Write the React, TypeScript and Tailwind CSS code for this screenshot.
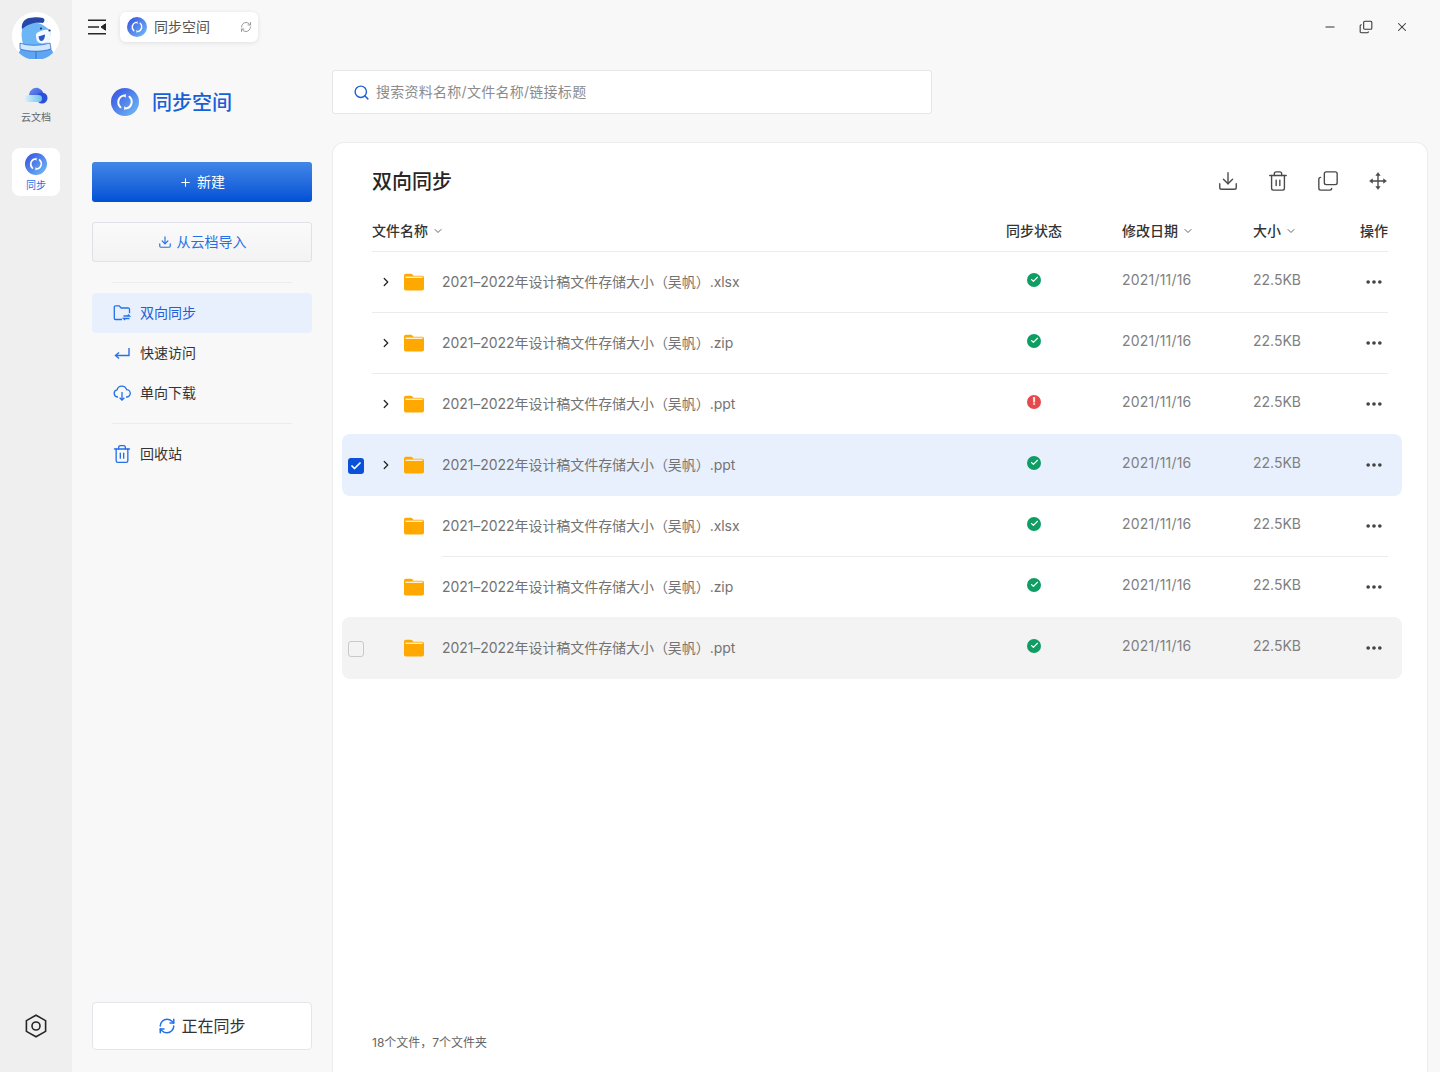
import React from 'react'
import { ChevronDown, ChevronRight, Search, Plus, Download, Trash2, Copy, Minus, X, Ellipsis, Check, RefreshCw } from 'lucide-react'

const SyncLogo = ({ size }: { size: number }) => (
  <svg width={size} height={size} viewBox="0 0 28 28" className="shrink-0">
    <defs>
      <linearGradient id={`logo${size}`} x1="0.1" y1="0.1" x2="0.9" y2="0.9">
        <stop offset="0" stopColor="#3a58e0" />
        <stop offset="1" stopColor="#6cb4f5" />
      </linearGradient>
    </defs>
    <circle cx="14" cy="14" r="14" fill={`url(#logo${size})`} />
    <path d="M12.4 7.6a6.8 6.8 0 0 0-2.9 11.6" fill="none" stroke="#fff" strokeWidth="2" strokeLinecap="round" />
    <path d="M15.6 20.4a6.8 6.8 0 0 0 2.9-11.6" fill="none" stroke="#fff" strokeWidth="2" strokeLinecap="round" />
    <path d="M14.8 5.8v4l-3-2zM13.2 22.2v-4l3 2z" fill="#fff" />
  </svg>
)

const Mascot = () => (
  <svg width="48" height="48" viewBox="0 0 48 48" className="rounded-full bg-white">
    {/* coat */}
    <path d="M6 47c0-6 2-10 5-12h26c3 2 5 6 5 12z" fill="#5ea6f2" />
    <path d="M24 38v9" stroke="#2a56c8" strokeWidth="0.7" />
    {/* face */}
    <path d="M11 32c-2-7-2-14 1-19 6-3 14-3 19 0l7 5c1 5 0 10-3 13-6 4-18 4-24 1z" fill="#6cb6f6" />
    {/* hat */}
    <path d="M10 17c-1-5 2-10 7-11 6-1 10-1 14 0 2 1 2 3 0 5-7-1-14 0-21 6z" fill="#2747a8" />
    {/* muzzle */}
    <path d="M24 22c3-3 8-5 14-4 1 5 0 10-2 12-4 2-9 2-11-1-1-2-1-5-1-7z" fill="#f2faff" />
    <path d="M26.500 24.500l6.500-2c0 3.500-1.500 6.500-3.500 6.500s-2.500-2-3-4.500z" fill="#2a56c8" />
    <circle cx="29" cy="16.500" r="1.100" fill="#1c2f70" />
    <circle cx="37.500" cy="18.500" r="1.100" fill="#1c2f70" />
    {/* scarf */}
    <path d="M8 31c8 3 20 3 30 0l1 6c-9 3-22 3-31 0z" fill="#cfe9fc" stroke="#2a56c8" strokeWidth="0.7" />
  </svg>
)

const CloudLogo = () => (
  <svg width="24" height="20" viewBox="0 0 24 20">
    <defs>
      <linearGradient id="cloudTop" x1="0" y1="0" x2="1" y2="1">
        <stop offset="0" stopColor="#6f8df2" />
        <stop offset="1" stopColor="#2b4fd8" />
      </linearGradient>
      <linearGradient id="cloudBar" x1="0" y1="0" x2="1" y2="0">
        <stop offset="0" stopColor="#d8f0fb" />
        <stop offset="1" stopColor="#6fc0f0" />
      </linearGradient>
    </defs>
    <path d="M5 11c0-6 5-9 9-8 3 1 5 3 5 5l-4 6H6z" fill="url(#cloudTop)" />
    <circle cx="18" cy="13" r="5.500" fill="#2b4fd8" />
    <rect x="1" y="10" width="17" height="7" rx="3.500" fill="url(#cloudBar)" />
  </svg>
)

const Folder = () => (
  <svg width="20" height="18" viewBox="0 0 20 18" className="shrink-0">
    <path d="M0 2.500A1.800 1.800 0 0 1 1.800.7h5c.6 0 1 .2 1.400.6L9.500 2.700h8.700A1.800 1.800 0 0 1 20 4.500v11.200a1.800 1.800 0 0 1-1.800 1.800H1.800A1.800 1.800 0 0 1 0 15.700z" fill="#ffa800" />
    <rect x="1.500" y="3.600" width="17" height="1.300" fill="#fff" fillOpacity="0.9" />
  </svg>
)

const FolderSyncIcon = () => (
  <svg width="18" height="16" viewBox="0 0 18 16" fill="none" stroke="#2570e8" strokeWidth="1.300">
    <path d="M9 14.500H2.500a1.200 1.200 0 0 1-1.200-1.200V2a1.200 1.200 0 0 1 1.200-1.200h3.700l2 2.200h7.100a1.200 1.200 0 0 1 1.200 1.200v4" />
    <path d="M10.500 11h6l-1.600-1.400M16.500 13.500h-6l1.600 1.400" />
  </svg>
)

const ReturnIcon = () => (
  <svg width="16" height="13" viewBox="0 0 16 13" fill="none" stroke="#2570e8" strokeWidth="1.400">
    <path d="M15 1v7.500H2" />
    <path d="M5 5.500L1.500 8.500 5 11.500" />
  </svg>
)

const CloudDownIcon = () => (
  <svg width="18" height="16" viewBox="0 0 18 16" fill="none" stroke="#2570e8" strokeWidth="1.300">
    <path d="M5 12H4.500A3.600 3.600 0 0 1 4 4.900a5 5 0 0 1 9.600-.3A3.700 3.700 0 0 1 13.500 12H13" />
    <path d="M9 7v8M6.600 12.800L9 15l2.400-2.200" />
  </svg>
)

const HexIcon = () => (
  <svg width="22" height="24" viewBox="0 0 22 24" fill="none" stroke="#262626" strokeWidth="1.600">
    <path d="M11 1.200l9.600 5.400v10.800L11 22.800 1.400 17.400V6.600z" />
    <circle cx="11" cy="12" r="4" />
  </svg>
)

const MenuFold = () => (
  <svg width="20" height="16" viewBox="0 0 20 16" fill="none" stroke="#262626" strokeWidth="1.500">
    <path d="M1 1.200h18M1 14.800h18M1 8h11" />
    <path d="M18.500 4.800v6.400L14 8z" fill="#262626" strokeWidth="1" />
  </svg>
)

const MoveIcon = () => (
  <svg width="18" height="18" viewBox="0 0 18 18" fill="#4a4a4a" stroke="#4a4a4a" strokeWidth="1.400">
    <path d="M9 2v14M2 9h14" fill="none" />
    <path d="M9 .5L11.200 3.500H6.800zM9 17.500L6.800 14.500H11.200zM.5 9L3.500 6.800V11.200zM17.500 9L14.500 11.200V6.800z" strokeWidth="0.500" />
  </svg>
)

const StatusDot = ({ error }: { error?: boolean }) =>
  error ? (
    <span className="w-[14px] h-[14px] rounded-full bg-[#e5484d] flex items-center justify-center text-white text-[11px] font-bold leading-none">!</span>
  ) : (
    <span className="w-[14px] h-[14px] rounded-full bg-[#0f9d63] flex items-center justify-center">
      <Check size={9} color="#fff" strokeWidth={3} />
    </span>
  )

interface FileRow {
  name: string
  expandable: boolean
  error?: boolean
  state?: 'checked' | 'hover'
  line?: 'full' | 'inset'
}

const rows: FileRow[] = [
  { name: '2021–2022年设计稿文件存储大小（吴帆）.xlsx', expandable: true, line: 'full' },
  { name: '2021–2022年设计稿文件存储大小（吴帆）.zip', expandable: true, line: 'full' },
  { name: '2021–2022年设计稿文件存储大小（吴帆）.ppt', expandable: true, error: true },
  { name: '2021–2022年设计稿文件存储大小（吴帆）.ppt', expandable: true, state: 'checked' },
  { name: '2021–2022年设计稿文件存储大小（吴帆）.xlsx', expandable: false, line: 'inset' },
  { name: '2021–2022年设计稿文件存储大小（吴帆）.zip', expandable: false },
  { name: '2021–2022年设计稿文件存储大小（吴帆）.ppt', expandable: false, state: 'hover' }
]

const Row = ({ row }: { row: FileRow }) => (
  <div
    className={`relative -ml-[30px] -mr-[14px] pl-[6px] flex items-center rounded-lg ${
      row.state === 'checked'
        ? 'h-[62px] -mt-px pb-px bg-[#e9f0fd]'
        : row.state === 'hover'
          ? 'h-[62px] -mt-px pb-px bg-[#f3f3f3]'
          : 'h-[61px] pb-[2px]'
    }`}
  >
    <span className="w-4 h-4 shrink-0">
      {row.state === 'checked' && (
        <span className="w-4 h-4 mt-px rounded-[3px] bg-[#0a50d8] flex items-center justify-center">
          <Check size={12} color="#fff" strokeWidth={3.5} />
        </span>
      )}
      {row.state === 'hover' && <span className="block w-4 h-4 mt-px rounded-[3px] border border-[#c9c9c9]" />}
    </span>
    <span className="w-[40px] pl-1 shrink-0 flex justify-center">
      {row.expandable && <ChevronRight size={14} color="#262626" strokeWidth={2.2} />}
    </span>
    <Folder />
    <span className="ml-[18px] w-[522px] shrink-0 text-sm tracking-[-0.06px] text-[#737373]">{row.name}</span>
    <span className="w-[70px] shrink-0 ml-[35px] -mt-1 flex justify-center">
      <StatusDot error={row.error} />
    </span>
    <span className="ml-[53px] w-[131px] shrink-0 -mt-1 text-sm tracking-[0.2px] text-[#808080]">2021/11/16</span>
    <span className="w-[111px] shrink-0 -mt-1 text-sm text-[#808080]">22.5KB</span>
    <Ellipsis size={20} color="#404040" strokeWidth={2.4} className="shrink-0" />
    {row.line === 'full' && <span className="absolute left-[30px] right-[14px] bottom-0 h-px bg-[#ececec]" />}
    {row.line === 'inset' && <span className="absolute left-[100px] right-[14px] bottom-0 h-px bg-[#ececec]" />}
  </div>
)

const NavItem = ({ icon, label, active }: { icon: React.ReactNode; label: string; active?: boolean }) => (
  <div className={`h-10 flex items-center rounded pl-5 ${active ? 'bg-[#e9f0fd] text-[#1f5fd6]' : 'text-[#333333]'}`}>
    <span className="w-5 flex justify-center">{icon}</span>
    <span className="ml-[8px] text-sm">{label}</span>
  </div>
)

const App: React.FC = () => {
  return (
    <div className="h-[1072px] w-[1440px] overflow-hidden flex bg-[#f8f8f8] font-['Inter','Noto_Sans_CJK_SC',sans-serif]">
      {/* Rail */}
      <aside className="w-[72px] shrink-0 bg-[#efefef] flex flex-col items-center pt-3 pb-[34px]">
        <Mascot />
        <div className="mt-[25px] flex flex-col items-center gap-[5px]">
          <CloudLogo />
          <span className="text-[10px] leading-[14px] text-[#666666]">云文档</span>
        </div>
        <div className="mt-[24px] w-12 h-12 rounded-lg bg-white flex flex-col items-center justify-center gap-[3px]">
          <SyncLogo size={22} />
          <span className="text-[10px] leading-[14px] text-[#2570e8]">同步</span>
        </div>
        <div className="mt-auto">
          <HexIcon />
        </div>
      </aside>

      <div className="flex-1 min-w-0 flex flex-col">
        {/* Title bar */}
        <header className="h-[70px] shrink-0 flex items-start pl-[15px] pr-[31px] pt-3">
          <div className="h-[30px] flex items-center">
            <MenuFold />
          </div>
          <div className="ml-[13px] w-[138px] h-[30px] rounded-md bg-white shadow-[0_1px_5px_rgba(0,0,0,0.1)] flex items-center pl-[7px] pr-[6px]">
            <SyncLogo size={20} />
            <span className="ml-[7px] text-sm text-[#555555]">同步空间</span>
            <RefreshCw size={12} color="#9a9a9a" className="ml-auto" />
          </div>
          <div className="ml-auto h-[30px] flex items-center gap-[22px] text-[#333333]">
            <Minus size={14} strokeWidth={1.8} />
            <Copy size={14} strokeWidth={1.8} className="-scale-x-100 rotate-180" />
            <X size={14} strokeWidth={1.8} />
          </div>
        </header>

        <div className="flex-1 min-h-0 flex">
          {/* Sidebar */}
          <nav className="w-[240px] shrink-0 ml-[20px] flex flex-col pb-[22px]">
            <div className="flex items-center pl-[19px] mt-[17px] h-[30px]">
              <SyncLogo size={28} />
              <span className="ml-[13px] mt-[2px] text-xl font-medium text-[#1560d8]">同步空间</span>
            </div>
            <button className="mt-[45px] w-[220px] h-10 rounded-[3px] bg-gradient-to-b from-[#4286e6] to-[#0050d6] text-white text-sm flex items-center justify-center gap-[5px]">
              <Plus size={13} />
              新建
            </button>
            <button className="mt-5 w-[220px] h-10 rounded-[3px] border border-[#dfe1e6] bg-gradient-to-b from-[#fafafa] to-[#f3f3f3] text-[#2570e8] text-sm flex items-center justify-center gap-[5px]">
              <Download size={14} />
              从云档导入
            </button>
            <div className="mt-5 ml-5 w-[180px] h-px bg-[#ececec]" />
            <div className="mt-[10px] w-[220px] flex flex-col">
              <NavItem icon={<FolderSyncIcon />} label="双向同步" active />
              <NavItem icon={<ReturnIcon />} label="快速访问" />
              <NavItem icon={<CloudDownIcon />} label="单向下载" />
            </div>
            <div className="mt-[10px] ml-5 w-[180px] h-px bg-[#ececec]" />
            <div className="mt-[10px] w-[220px]">
              <NavItem icon={<Trash2 size={20} color="#2570e8" strokeWidth={1.6} />} label="回收站" />
            </div>
            <button className="mt-auto w-[220px] h-12 rounded border border-[#e3e5ea] bg-white text-base text-[#333333] flex items-center justify-center gap-[5px]">
              <RefreshCw size={18} color="#2570e8" />
              正在同步
            </button>
          </nav>

          {/* Main */}
          <main className="w-[1096px] shrink-0 flex flex-col">
            <div className="shrink-0 w-[600px] h-11 border border-[#e6e6e6] rounded-[3px] bg-white flex items-center pl-5">
              <Search size={17} color="#1f5fd6" strokeWidth={2} />
              <span className="ml-[6px] text-sm tracking-[0.27px] text-[#8c8c8c]">搜索资料名称/文件名称/链接标题</span>
            </div>
            <section className="mt-7 flex-1 rounded-t-xl border border-b-0 border-[#ececec] bg-white pl-[39px] pr-[39px] flex flex-col">
              <div className="h-[76px] shrink-0 flex items-center justify-between">
                <h1 className="mt-[2px] text-xl font-medium text-[#262626]">双向同步</h1>
                <div className="flex items-center gap-[28px] -mr-px text-[#4a4a4a]">
                  <Download size={22} strokeWidth={1.5} />
                  <Trash2 size={22} strokeWidth={1.5} />
                  <Copy size={22} strokeWidth={1.5} className="-scale-x-100 rotate-180" />
                  <span className="w-[22px] flex justify-center">
                    <MoveIcon />
                  </span>
                </div>
              </div>
              <div className="h-[33px] pt-[2px] shrink-0 flex items-start border-b border-[#ececec] text-sm font-medium text-[#333333]">
                <span className="w-[634px] flex items-center gap-1">
                  文件名称
                  <ChevronDown size={12} color="#666666" />
                </span>
                <span className="w-[116px]">同步状态</span>
                <span className="w-[131px] flex items-center gap-1">
                  修改日期
                  <ChevronDown size={12} color="#666666" />
                </span>
                <span className="w-[107px] flex items-center gap-1">
                  大小
                  <ChevronDown size={12} color="#666666" />
                </span>
                <span>操作</span>
              </div>
              <div className="shrink-0">
                {rows.map((row, i) => (
                  <Row key={i} row={row} />
                ))}
              </div>
              <div className="mt-auto mb-[21px] text-xs text-[#666666]">18个文件，7个文件夹</div>
            </section>
          </main>
        </div>
      </div>
    </div>
  )
}

export default App
